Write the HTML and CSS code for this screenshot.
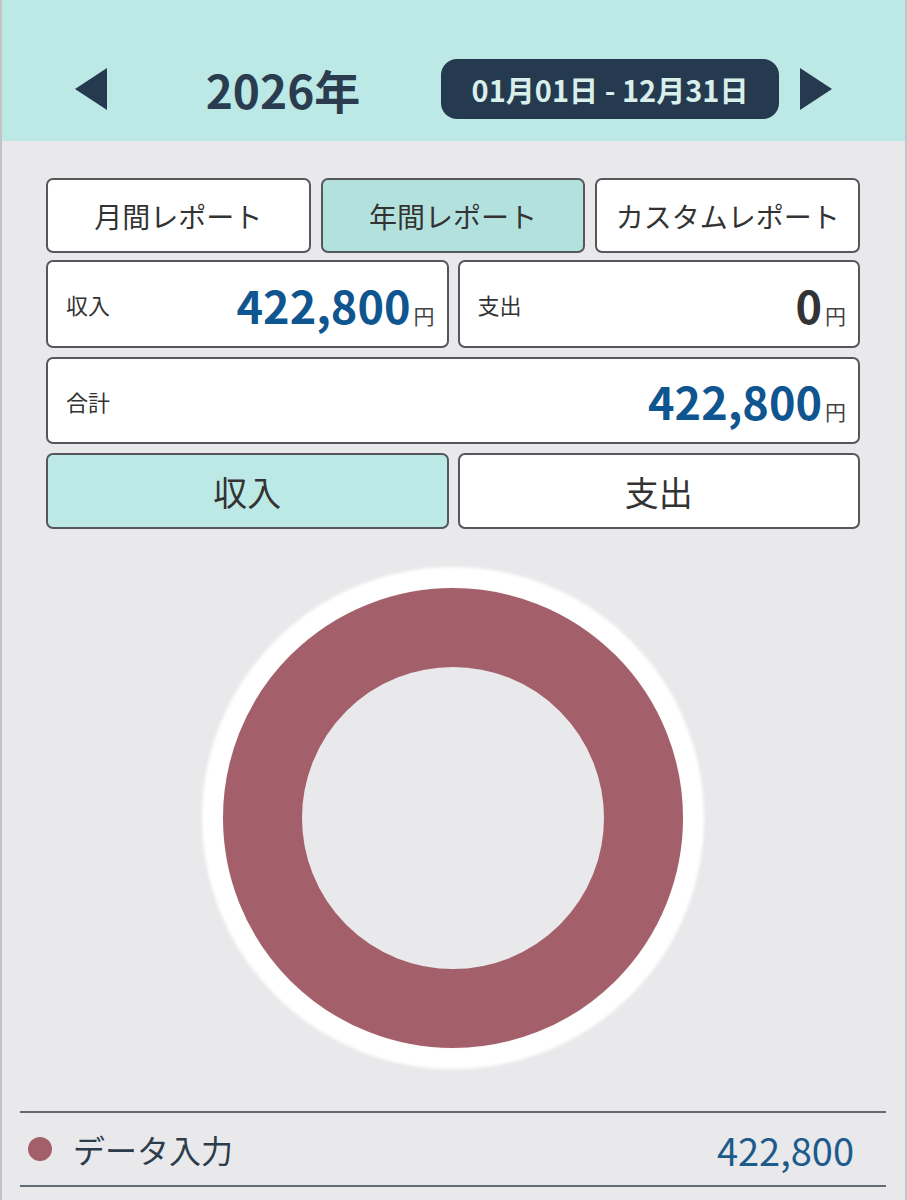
FILE: index.html
```html
<!DOCTYPE html>
<html lang="ja">
<head>
    <meta charset="UTF-8">
    <meta name="viewport" content="width=device-width, initial-scale=1.0">
    <title>レポート</title>
    <link rel="stylesheet" href="styles.css">
</head>
<body>
    <div class="app">
        <header class="top">
            <span class="arrow prev"></span>
            <div class="year">2026年</div>
            <div class="range">01月01日 - 12月31日</div>
            <span class="arrow next"></span>
        </header>

        <main class="content">
            <div class="tabs">
                <div class="tab">月間レポート</div>
                <div class="tab active">年間レポート</div>
                <div class="tab">カスタムレポート</div>
            </div>

            <div class="sums">
                <div class="box">
                    <span class="label">収入</span>
                    <span class="amount blue">422,800<small>円</small></span>
                </div>
                <div class="box">
                    <span class="label">支出</span>
                    <span class="amount">0<small>円</small></span>
                </div>
            </div>

            <div class="box total">
                <span class="label">合計</span>
                <span class="amount blue">422,800<small>円</small></span>
            </div>

            <div class="toggle">
                <div class="switch active">収入</div>
                <div class="switch">支出</div>
            </div>

            <div class="chart">
                <svg width="506" height="506" viewBox="0 0 506 506">
                    <defs>
                        <filter id="soft" x="-10%" y="-10%" width="120%" height="120%">
                            <feGaussianBlur stdDeviation="1.6"/>
                        </filter>
                    </defs>
                    <circle cx="253" cy="253" r="240" fill="none" stroke="#fff" stroke-width="22" filter="url(#soft)"/>
                    <circle cx="253" cy="253" r="190.5" fill="none" stroke="#a4606a" stroke-width="79"/>
                </svg>
            </div>
        </main>

        <div class="legend">
            <div class="row">
                <span class="dot"></span>
                <span class="name">データ入力</span>
                <span class="value">422,800</span>
            </div>
        </div>
    </div>
</body>
</html>
```

FILE: styles.css
```css
*{
    margin: 0;
    padding: 0;
    box-sizing: border-box;
}
body{
    background: #e9e9eb;
    font-family: "Noto Sans CJK JP", "Noto Sans", sans-serif;
    color: #333;
}
.app{
    min-height: 1200px;
    border-left: 2px solid #c4c4c6;
    border-right: 2px solid #c4c4c6;
}

/* header */
.top{
    height: 141px;
    background: #bce9e5;
    display: flex;
    align-items: center;
    padding: 36px 0 0 73px;
}
.arrow{
    width: 0;
    height: 0;
    border-top: 21.5px solid transparent;
    border-bottom: 21.5px solid transparent;
}
.prev{
    border-right: 32px solid #253a4e;
}
.next{
    border-left: 32px solid #253a4e;
    margin-left: 21px;
}
.year{
    width: 334px;
    padding-left: 18px;
    text-align: center;
    font-size: 46px;
    font-weight: 700;
    color: #2a3d50;
}
.range{
    width: 338px;
    height: 60px;
    border-radius: 16px;
    background: #253a4e;
    color: #d8efec;
    font-size: 29px;
    font-weight: 700;
    display: flex;
    align-items: center;
    justify-content: center;
}

/* main */
.content{
    padding: 37px 45px 0 44px;
}
.tabs{
    display: grid;
    grid-template-columns: 1fr 1fr 1fr;
    gap: 10px;
}
.tab{
    height: 75px;
    background: #fff;
    border: 2px solid #55585b;
    border-radius: 7px;
    font-size: 28px;
    display: flex;
    align-items: center;
    justify-content: center;
}
.tab.active{
    background: #b3e2de;
}
.sums{
    display: grid;
    grid-template-columns: 1fr 1fr;
    gap: 9px;
    margin-top: 7px;
}
.box{
    height: 88px;
    background: #fff;
    border: 2px solid #55585b;
    border-radius: 7px;
    display: flex;
    align-items: center;
    justify-content: space-between;
    padding: 0 12px 0 18px;
}
.total{
    margin-top: 9px;
    height: 87px;
}
.label{
    font-size: 22px;
    color: #333;
}
.amount{
    font-size: 45px;
    font-weight: 700;
    color: #333;
    line-height: 1;
}
.amount.blue{
    color: #0f5590;
}
.amount small{
    font-size: 21px;
    font-weight: 400;
    color: #444;
    margin-left: 3px;
}
.toggle{
    display: grid;
    grid-template-columns: 1fr 1fr;
    gap: 9px;
    margin-top: 9px;
}
.switch{
    height: 76px;
    background: #fff;
    border: 2px solid #55585b;
    border-radius: 7px;
    font-size: 34px;
    display: flex;
    align-items: center;
    justify-content: center;
}
.switch.active{
    background: #bce9e5;
}
.chart{
    display: flex;
    justify-content: center;
    margin-top: 36px;
}

/* legend */
.legend{
    margin: 40px 19px 0 18px;
}
.row{
    height: 76px;
    border-top: 2px solid #636c74;
    border-bottom: 2px solid #636c74;
    display: flex;
    align-items: center;
    padding: 0 32px 0 8px;
}
.dot{
    width: 24px;
    height: 24px;
    border-radius: 50%;
    background: #a4606a;
}
.name{
    margin-left: 21px;
    font-size: 32px;
    color: #2d3c4a;
    flex: 1;
}
.value{
    font-size: 38px;
    color: #1d5b8c;
}
```
